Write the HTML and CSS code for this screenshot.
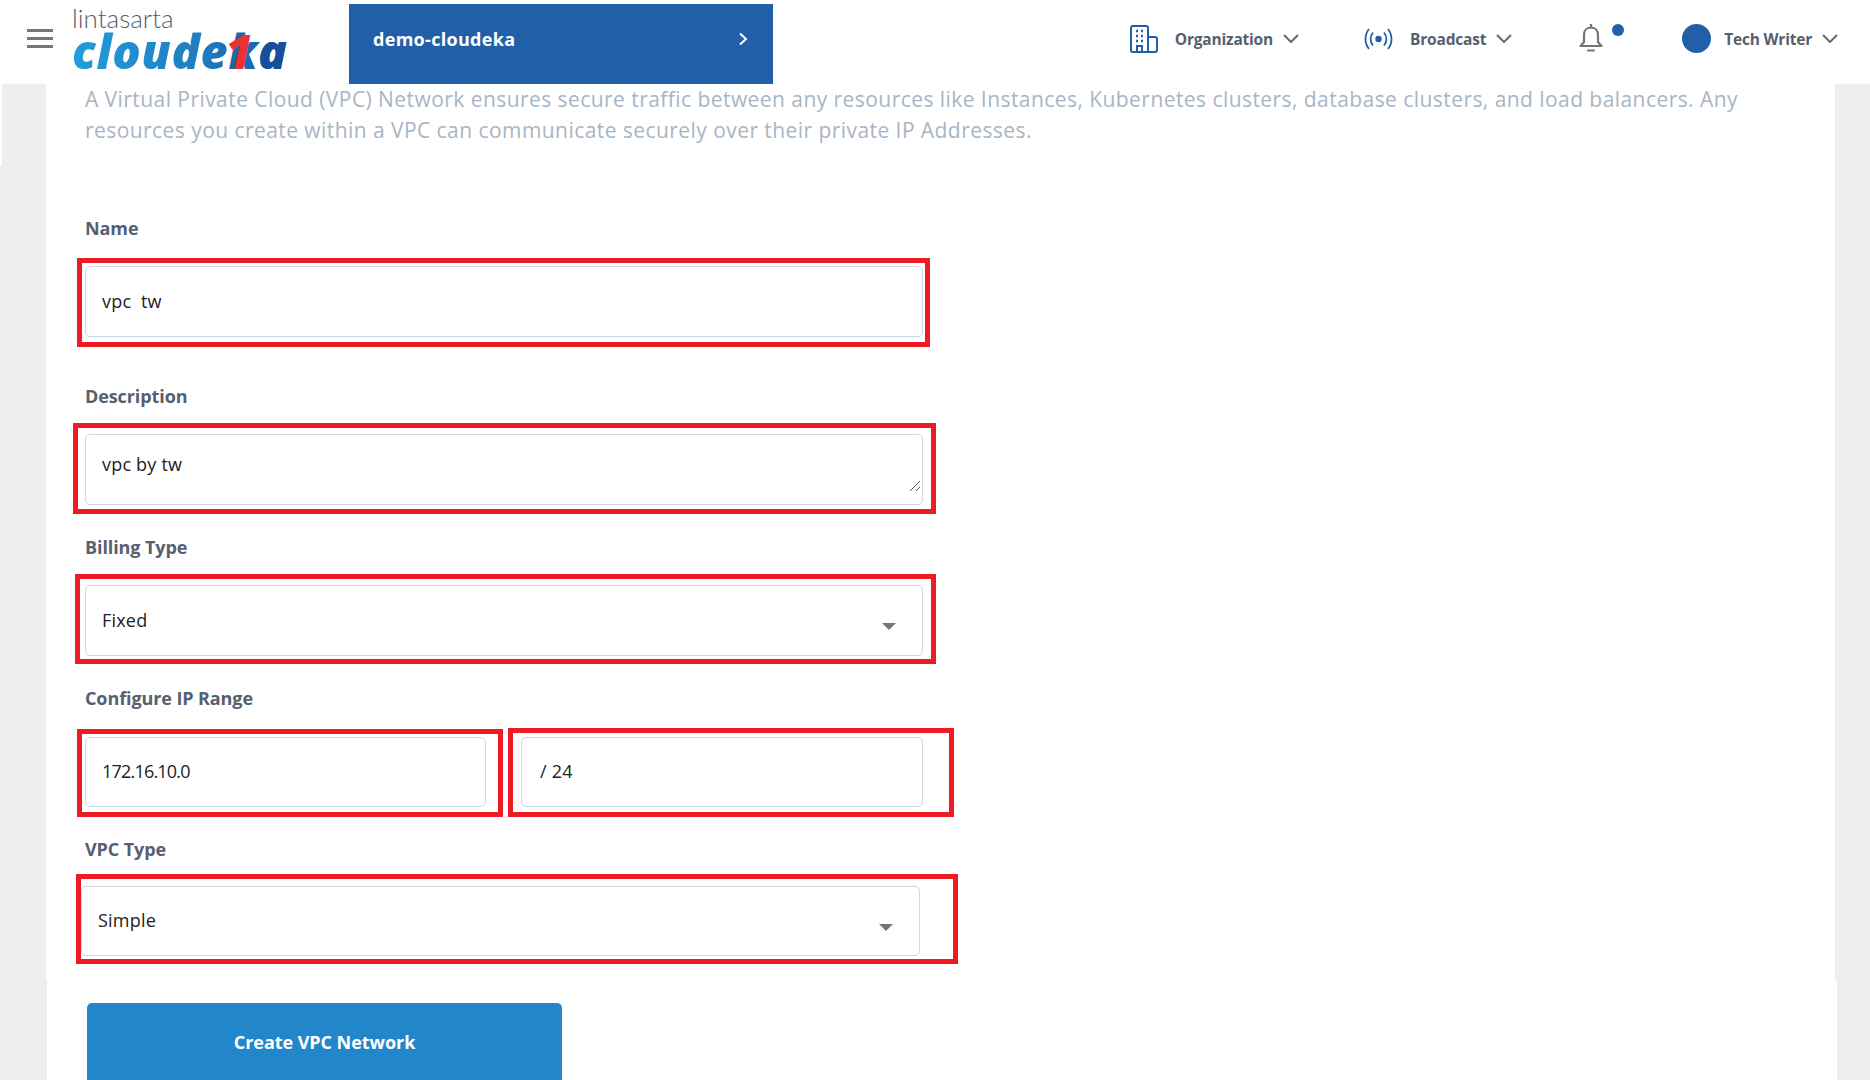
FILE: index.html
```html
<!DOCTYPE html>
<html lang="en">
<head>
  <meta charset="UTF-8" />
  <title>Create VPC Network</title>
  <link rel="stylesheet" href="styles.css">
</head>
<body>

<header class="topbar">
  <button class="menu-btn" aria-label="Menu"><span></span><span></span><span></span></button>
  <a class="logo">
    <span class="logo-top">lintasarta</span>
    <span class="logo-main">cloude<span class="logo-k">k</span><span class="logo-a">a</span></span>
  </a>
  <div class="project">
    <span>demo-cloudeka</span>
    <svg width="10" height="14" viewBox="0 0 10 14" fill="none" stroke="#fff" stroke-width="2"><path d="M2 1.5 8 7l-6 5.5"/></svg>
  </div>
  <nav class="topnav">
    <div class="nav-item">
      <svg class="nav-icon" width="28" height="28" viewBox="0 0 28 28" fill="none" stroke="#2160a8" stroke-width="2">
        <path d="M1 26V3a2 2 0 0 1 2-2h13a2 2 0 0 1 2 2v24H3a2 2 0 0 1-2-1z"/>
        <path d="M18 12h7a2 2 0 0 1 2 2v11a2 2 0 0 1-2 2h-7"/>
        <path d="M7 27v-6h5v6"/>
        <path d="M6 6h2M11 6h2M6 11h2M11 11h2M6 16h2M11 16h2" stroke-width="2.4"/>
      </svg>
      <span>Organization</span>
      <svg class="chev" width="16" height="9" viewBox="0 0 16 9" fill="none"><path d="M1 1l7 7 7-7"/></svg>
    </div>
    <div class="nav-item">
      <svg class="nav-icon" width="29" height="22" viewBox="0 0 29 22" fill="none" stroke="#2160a8" stroke-width="1.8">
        <circle cx="14.5" cy="11" r="3.2" fill="#2160a8" stroke="none"/>
        <path d="M9 4.500a10 10 0 0 0 0 13M20 4.500a10 10 0 0 1 0 13"/>
        <path d="M5 1a16 16 0 0 0 0 20M24 1a16 16 0 0 1 0 20"/>
      </svg>
      <span>Broadcast</span>
      <svg class="chev" width="16" height="9" viewBox="0 0 16 9" fill="none"><path d="M1 1l7 7 7-7"/></svg>
    </div>
    <div class="bell">
      <svg width="24" height="29" viewBox="0 0 24 29" fill="none" stroke="#757575" stroke-width="2.2">
        <path d="M12 3.500c-4.500 0-7 3.300-7 7.500v7l-3.500 4h21L19 18v-7c0-4.200-2.500-7.500-7-7.500z" stroke-linejoin="round"/>
        <path d="M12 0.500v3M9 26.500h6" stroke-linecap="round"/>
      </svg>
      <i class="bell-dot"></i>
    </div>
    <div class="nav-item user">
      <i class="avatar"></i>
      <span>Tech Writer</span>
      <svg class="chev" width="16" height="9" viewBox="0 0 16 9" fill="none"><path d="M1 1l7 7 7-7"/></svg>
    </div>
  </nav>
</header>

<main class="content">
  <section class="card">
    <p class="intro">A Virtual Private Cloud (VPC) Network ensures secure traffic between any resources like Instances, Kubernetes clusters, database clusters, and load balancers. Any resources you create within a VPC can communicate securely over their private IP Addresses.</p>

    <form class="vpc-form">
      <div class="field field-name">
        <label>Name</label>
        <div class="control">
          <input type="text" value="vpc  tw" />
          <span class="mark mark-name"></span>
        </div>
      </div>

      <div class="field">
        <label>Description</label>
        <div class="control">
          <textarea>vpc by tw</textarea>
          <svg class="grip" width="12" height="12" viewBox="0 0 12 12" fill="none" stroke="#555" stroke-width="1"><path d="M1 11 11 1M7 11l4-4"/></svg>
          <span class="mark mark-desc"></span>
        </div>
      </div>

      <div class="field">
        <label>Billing Type</label>
        <div class="control select">
          <select><option>Fixed</option></select>
          <span class="mark mark-billing"></span>
        </div>
      </div>

      <div class="field">
        <label class="label-ip">Configure IP Range</label>
        <div class="ip-row">
          <div class="control control-short">
            <input class="input-ip" type="text" value="172.16.10.0" />
            <span class="mark mark-ip"></span>
          </div>
          <div class="control control-short">
            <input class="input-cidr" type="text" value="/ 24" />
            <span class="mark mark-cidr"></span>
          </div>
        </div>
      </div>

      <div class="field field-last">
        <label class="label-vpc">VPC Type</label>
        <div class="control control-short select control-vpc">
          <select><option>Simple</option></select>
          <span class="mark mark-vpc"></span>
        </div>
      </div>
    </form>
  </section>

  <section class="actions">
    <button class="btn-create" type="button">Create VPC Network</button>
  </section>
</main>

</body>
</html>
```

FILE: styles.css
```css
* {
  box-sizing: border-box;
}

html, body {
  height: 1080px;
  overflow: hidden;
}

body {
  margin: 0;
  font-family: "Open Sans", "Noto Sans", sans-serif;
  background: #eeeeee;
  color: #222;
}

/* top bar */
.topbar {
  display: flex;
  align-items: center;
  height: 84px;
  padding-left: 27px;
  padding-right: 32px;
  background: #fff;
}

.menu-btn {
  display: flex;
  flex-direction: column;
  gap: 5px;
  width: 26px;
  margin-bottom: 7px;
  padding: 0;
  border: none;
  background: none;
}

.menu-btn span {
  height: 3px;
  background: #777;
}

.logo {
  width: 277px;
  margin-left: 19px;
  display: flex;
  flex-direction: column;
  align-self: flex-start;
  padding-top: 3px;
}

.logo-top {
  font-family: "Lato", sans-serif;
  font-weight: 300;
  font-size: 26px;
  line-height: 30px;
  color: #55606c;
}

.logo-main {
  width: 216px;
  margin-top: -4px;
  font-family: "Open Sans", sans-serif;
  font-weight: 800;
  font-style: italic;
  font-size: 47px;
  line-height: 44px;
  letter-spacing: 0.7px;
  background: linear-gradient(90deg, #229ddb, #1f7dc0 60%, #174f9c);
  -webkit-background-clip: text;
  background-clip: text;
  color: transparent;
}

.logo-k {
  position: relative;
  color: #1a68ae;
}

.logo-a {
  color: #174f9c;
}

.logo-k::before {
  content: "1";
  position: absolute;
  left: -3px;
  top: 0;
  line-height: normal;
  color: #ea3230;
}

.project {
  display: flex;
  align-items: center;
  justify-content: space-between;
  align-self: flex-end;
  width: 424px;
  height: 80px;
  padding: 0 25px 10px 24px;
  background: #2160a8;
  color: #fff;
  font-size: 18px;
  font-weight: 700;
  letter-spacing: 0.3px;
}

.topnav {
  display: flex;
  align-items: center;
  gap: 65px;
  margin-left: auto;
  padding-bottom: 7px;
}

.nav-item {
  display: flex;
  align-items: center;
  font-size: 15.5px;
  font-weight: 700;
  letter-spacing: -0.2px;
  color: #565f6e;
}

.nav-icon {
  margin-right: 17px;
}

.chev {
  margin-left: 10px;
}

.chev path {
  stroke: #6b6b6b;
  stroke-width: 2;
}

.bell {
  position: relative;
  width: 38px;
  height: 29px;
  margin-left: 2px;
}

.bell svg {
  display: block;
}

.bell-dot {
  position: absolute;
  right: -7px;
  top: 0;
  width: 12px;
  height: 12px;
  border-radius: 50%;
  background: #2160a8;
}

.avatar {
  width: 29px;
  height: 29px;
  margin-right: 13px;
  border-radius: 50%;
  background: #2160a8;
}

/* page body */
.content {
  position: relative;
  height: 996px;
  padding-left: 46px;
  padding-right: 35px;
}

.content::before {
  content: "";
  position: absolute;
  left: 0;
  top: 0;
  width: 2px;
  height: 82px;
  background: #fff;
}

.card {
  height: 896px;
  padding-left: 39px;
  background: #fff;
}

.intro {
  margin: 0 0 70px;
  width: 1670px;
  font-size: 21px;
  line-height: 31px;
  letter-spacing: 0.44px;
  color: #a8b5c4;
}

.vpc-form {
  width: 838px;
}

.field {
  margin-bottom: 30px;
}

.field-name {
  margin-bottom: 47px;
}

.field-last {
  margin-bottom: 0;
}

label {
  display: block;
  height: 24px;
  margin-bottom: 26px;
  font-size: 18px;
  font-weight: 700;
  line-height: 24px;
  letter-spacing: -0.1px;
  color: #556070;
}

.label-ip {
  margin-bottom: 27px;
}

.label-vpc {
  margin-bottom: 25px;
}

.control {
  position: relative;
  height: 71px;
}

.control-short {
  height: 70px;
}

.control input,
.control textarea,
.control select {
  display: block;
  width: 100%;
  height: 100%;
  padding: 0 16px 2px;
  border: 1px solid #cbd8e5;
  border-radius: 5px;
  outline: none;
  background: #fff;
  font-family: "Open Sans", "Noto Sans", sans-serif;
  font-size: 18px;
  letter-spacing: 0.2px;
  color: #222;
}

.control textarea {
  padding-top: 17px;
  line-height: 24px;
  resize: none;
}

.control select {
  appearance: none;
}

.control .input-ip {
  letter-spacing: -0.8px;
}

.control .input-cidr {
  padding-left: 18px;
}

.grip {
  position: absolute;
  right: 2px;
  bottom: 13px;
}

.select::after {
  content: "";
  position: absolute;
  right: 27px;
  top: 38px;
  border-left: 7px solid transparent;
  border-right: 7px solid transparent;
  border-top: 7px solid #757575;
}

.control-vpc {
  width: 839px;
  margin-left: -4px;
}

.ip-row {
  display: grid;
  grid-template-columns: 401px 402px;
  gap: 35px;
}

/* red annotation frames drawn over the screenshot */
.mark {
  position: absolute;
  border: 5px solid #ed1c24;
  pointer-events: none;
}

.mark-name { inset: -8px -7px -10px -8px; }
.mark-desc { inset: -11px -13px -9px -12px; }
.mark-billing { inset: -11px -13px -8px -10px; }
.mark-ip { inset: -8px -17px -10px -8px; }
.mark-cidr { inset: -9px -31px -10px -13px; }
.mark-vpc { inset: -12px -38px -8px -5px; }

/* footer button */
.actions {
  height: 100px;
  margin-left: 1px;
  margin-right: -2px;
  padding-top: 23px;
  padding-left: 40px;
  background: #fff;
}

.btn-create {
  display: block;
  width: 475px;
  height: 77px;
  padding: 0;
  border: none;
  border-radius: 5px 5px 0 0;
  background: #2287ca;
  color: #fff;
  font-family: "Open Sans", "Noto Sans", sans-serif;
  font-size: 18px;
  font-weight: 700;
  letter-spacing: -0.05px;
}
```
